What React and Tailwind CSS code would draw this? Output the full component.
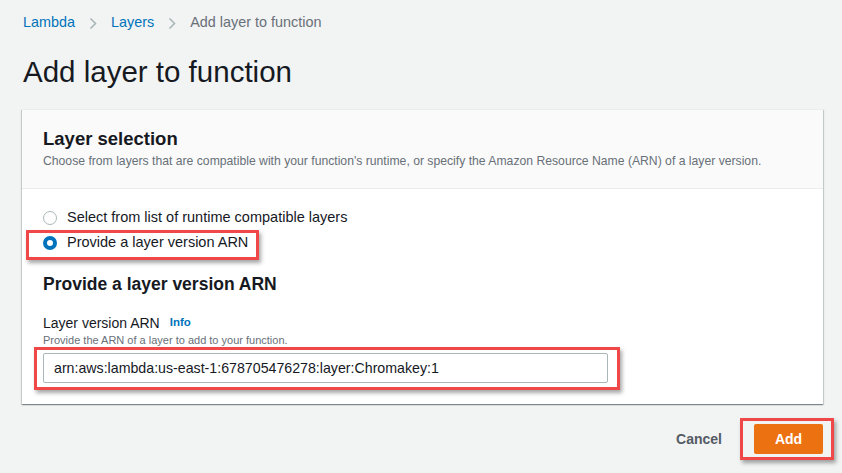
import React from "react";

function Radio({ checked, label }) {
  return (
    <label className="flex items-center h-5 gap-[10px] text-[14.5px] text-[#16191f]">
      {checked ? (
        <span className="w-[14px] h-[14px] rounded-full bg-[#0073bb] flex items-center justify-center">
          <span className="w-[6px] h-[6px] rounded-full bg-white" />
        </span>
      ) : (
        <span className="w-[14px] h-[14px] rounded-full border-[1.5px] border-[#aab7b8] bg-white" />
      )}
      <span>{label}</span>
    </label>
  );
}

function RedBox({ className }) {
  return (
    <span
      className={`absolute border-[3px] border-[#f04848] shadow-[2px_3px_4px_rgba(0,0,0,0.35)] pointer-events-none ${className}`}
    />
  );
}

function Chevron() {
  return (
    <span className="mx-[14px] flex items-center">
      <svg width="8" height="13" viewBox="0 0 8 13" fill="none">
        <path d="M1.5 1.5l5 5-5 5" stroke="#aab7b8" strokeWidth="1.6" />
      </svg>
    </span>
  );
}

export default function App() {
  return (
    <div
      className="min-h-[473px] bg-[#f2f3f3] pl-[22px] pr-[19px] pt-[13px] text-[#16191f]"
      style={{ fontFamily: '"Liberation Sans", Arial, sans-serif' }}
    >
      {/* breadcrumb */}
      <nav className="flex items-center h-5 pl-px text-[14.4px]">
        <a className="text-[#0073bb]">Lambda</a>
        <Chevron />
        <a className="text-[#0073bb]">Layers</a>
        <Chevron />
        <span className="text-[#687078]">Add layer to function</span>
      </nav>

      <h1 className="mt-[21px] pl-px text-[29.5px] leading-9 font-normal text-[#16191f]">
        Add layer to function
      </h1>

      {/* card */}
      <section className="mt-[19px] bg-white border-t border-[#eaeded] shadow-[0_1px_1px_rgba(0,28,36,0.3),1px_1px_1px_rgba(0,28,36,0.15),-1px_1px_1px_rgba(0,28,36,0.15)]">
        <div className="bg-[#fafafa] border-b border-[#eaeded] px-[21px] pt-[18px] pb-[19px]">
          <h2 className="text-[18.5px] leading-[22px] font-bold">Layer selection</h2>
          <p className="mt-[3px] text-[12.2px] leading-4 text-[#687078]">
            Choose from layers that are compatible with your function's runtime, or specify the Amazon Resource Name (ARN) of a layer version.
          </p>
        </div>

        <div className="px-[21px] pt-[19px] pb-[21px]">
          <div className="flex flex-col gap-[5px]">
            <Radio label="Select from list of runtime compatible layers" />
            <div className="relative">
              <Radio checked label="Provide a layer version ARN" />
              <RedBox className="left-[-17px] top-[-3px] bottom-[-7px] w-[233px]" />
            </div>
          </div>

          <h3 className="mt-5 text-[17.5px] leading-[22px] font-bold">Provide a layer version ARN</h3>

          <div className="mt-[19px] flex items-center gap-[10px] h-[18px] text-[14px]">
            <span>Layer version ARN</span>
            <a className="text-[11.5px] font-bold text-[#0073bb]">Info</a>
          </div>
          <p className="mt-px text-[11px] leading-[14px] text-[#687078]">
            Provide the ARN of a layer to add to your function.
          </p>

          <div className="relative mt-[6px] w-[565px]">
            <input
              readOnly
              value="arn:aws:lambda:us-east-1:678705476278:layer:Chromakey:1"
              className="w-full h-[30px] px-[10px] text-[14.2px] text-[#16191f] bg-white border border-[#aab7b8] rounded-[2px] outline-none"
              style={{ fontFamily: '"Liberation Sans", Arial, sans-serif' }}
            />
            <RedBox className="left-[-9px] right-[-12px] top-[-6px] bottom-[-7px]" />
          </div>
        </div>
      </section>

      {/* actions */}
      <div className="mt-5 flex items-center justify-end gap-[32px]">
        <button className="text-[14px] font-bold text-[#545b64]">Cancel</button>
        <div className="relative">
          <button className="w-[69px] h-[30px] rounded-[2px] bg-[#ec7211] text-[14px] font-bold text-white">
            Add
          </button>
          <RedBox className="left-[-14px] right-[-11px] top-[-6px] bottom-[-6px]" />
        </div>
      </div>
    </div>
  );
}
